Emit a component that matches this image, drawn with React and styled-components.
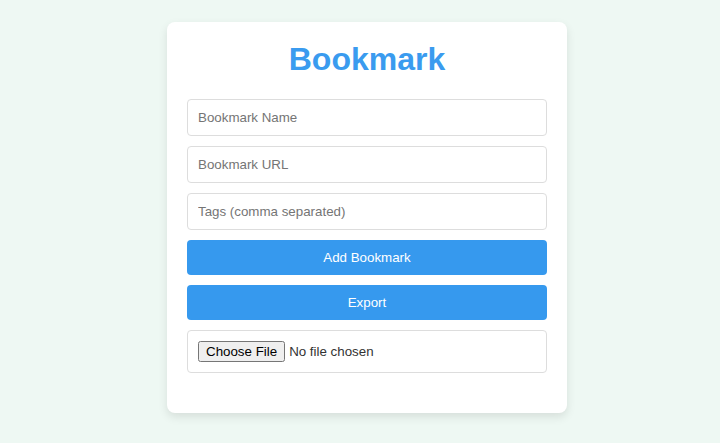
import React from 'react';
import styled, { createGlobalStyle } from 'styled-components';

const GlobalStyle = createGlobalStyle`
  html, body {
    margin: 0;
    padding: 0;
    background: #eef8f3;
  }
  body {
    font-family: "Liberation Sans", Arial, sans-serif;
  }
`;

const Page = styled.div`
  min-height: 443px;
  box-sizing: border-box;
  padding: 22px 0 0 14px;
`;

const Card = styled.div`
  width: 400px;
  box-sizing: border-box;
  margin: 0 auto;
  padding: 19px 20px 30px;
  background: #fff;
  border-radius: 8px;
  box-shadow: 0 4px 10px rgba(0, 0, 0, 0.1);
`;

const Title = styled.h1`
  margin: 0 0 21px;
  font-size: 32px;
  font-weight: bold;
  text-align: center;
  color: #3a9bef;
`;

const Field = styled.input`
  display: block;
  width: 100%;
  box-sizing: border-box;
  margin: 0 0 10px;
  padding: 10px;
  border: 1px solid #ddd;
  border-radius: 4px;
  font-family: "Liberation Sans", Arial, sans-serif;
  font-size: 13.333px;
  color: #333;
  background: #fff;

  &::placeholder {
    color: #757575;
  }
`;

const Button = styled.button`
  display: block;
  width: 100%;
  margin: 0 0 10px;
  padding: 10px;
  border: none;
  border-radius: 4px;
  background: #3699ee;
  color: #fff;
  font-family: "Liberation Sans", Arial, sans-serif;
  font-size: 13.333px;
  cursor: pointer;
`;

export default function App() {
  return (
    <>
      <GlobalStyle />
      <Page>
        <Card>
          <Title>Bookmark</Title>
          <Field type="text" placeholder="Bookmark Name" />
          <Field type="text" placeholder="Bookmark URL" />
          <Field type="text" placeholder="Tags (comma separated)" />
          <Button>Add Bookmark</Button>
          <Button>Export</Button>
          <Field type="file" />
        </Card>
      </Page>
    </>
  );
}
